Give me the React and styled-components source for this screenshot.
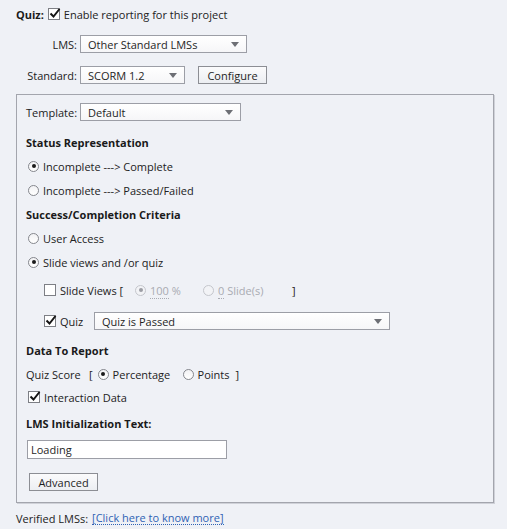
import React from 'react';
import styled, { createGlobalStyle } from 'styled-components';

const GlobalStyle = createGlobalStyle`
  html, body {
    margin: 0;
    padding: 0;
    background: #eff1f6;
  }
  body {
    font-family: "Open Sans", "Liberation Sans", Arial, sans-serif;
    font-size: 11px;
    color: #1f1f1f;
  }
`;

const Page = styled.div`
  width: 507px;
  height: 529px;
  box-sizing: border-box;
  padding: 6px 0 0 16px;
  display: flex;
  flex-direction: column;
`;

const Row = styled.div`
  display: flex;
  align-items: center;
  height: ${p => p.h || 24}px;
  margin-top: ${p => p.mt || 0}px;
  padding-left: ${p => p.indent || 0}px;
  flex-shrink: 0;
`;

const Bold = styled.span`
  font-weight: bold;
  color: #1a1a1a;
`;

const Label = styled.span`
  width: ${p => (p.w ? `${p.w}px` : 'auto')};
  text-align: ${p => (p.right ? 'right' : 'left')};
  padding-right: ${p => p.pr || 0}px;
  color: ${p => (p.disabled ? '#a9abb2' : '#222222')};
  white-space: nowrap;
  box-sizing: border-box;
`;

const Dotted = styled.span`
  border-bottom: 1px dotted #a9abb2;
`;

const SelectBox = styled.div`
  position: relative;
  width: ${p => p.w}px;
  height: 18px;
  box-sizing: border-box;
  border: 1px solid #9c9ea6;
  background: linear-gradient(#ffffff, #f6f6f8);
  display: flex;
  align-items: center;
  padding-left: 7px;
  color: #1f1f1f;
  margin-left: ${p => p.ml || 0}px;
`;

const Arrow = styled.span`
  position: absolute;
  right: 7px;
  top: 6px;
  width: 0;
  height: 0;
  border-left: 4px solid transparent;
  border-right: 4px solid transparent;
  border-top: 5px solid #6d6f75;
`;

const Button = styled.div`
  width: ${p => p.w}px;
  height: 18px;
  box-sizing: border-box;
  border: 1px solid #8c8e94;
  background: linear-gradient(#fbfbfc, #eceef2);
  display: flex;
  align-items: center;
  justify-content: center;
  color: #1f1f1f;
  margin-left: ${p => p.ml || 0}px;
`;

const Panel = styled.div`
  width: 478px;
  height: 409px;
  box-sizing: border-box;
  margin-top: 10px;
  border: 1px solid #a3a5ad;
  box-shadow: 1px 1px 0 #cfd1d8;
  padding: 8px 0 0 9px;
  display: flex;
  flex-direction: column;
`;

const RadioCircle = styled.span`
  width: 11px;
  height: 11px;
  box-sizing: border-box;
  border-radius: 50%;
  border: 1px solid ${p => (p.disabled ? '#c4c6cc' : '#85878d')};
  background: ${p => (p.disabled ? '#f2f3f6' : 'linear-gradient(#f2f2f4, #ffffff)')};
  display: inline-flex;
  align-items: center;
  justify-content: center;
  margin: 0 4px 0 ${p => p.ml || 2}px;
  flex-shrink: 0;

  &::after {
    content: '';
    display: ${p => (p.checked ? 'block' : 'none')};
    width: 4px;
    height: 4px;
    border-radius: 50%;
    background: ${p => (p.disabled ? '#9c9ea4' : '#1b1b1b')};
  }
`;

const CheckSquare = styled.span`
  width: 12px;
  height: 12px;
  box-sizing: border-box;
  border: 1px solid #7d7f85;
  background: #ffffff;
  display: inline-flex;
  margin: 0 4px 0 ${p => p.ml || 2}px;
  flex-shrink: 0;
  position: relative;

  svg {
    position: absolute;
    left: 0px;
    top: -2px;
  }
`;

const Radio = ({ checked, disabled, ml, children }) => (
  <>
    <RadioCircle checked={checked} disabled={disabled} ml={ml} />
    {children}
  </>
);

const Check = ({ checked, ml }) => (
  <CheckSquare ml={ml}>
    {checked && (
      <svg width="12" height="12" viewBox="0 0 12 12">
        <path d="M1.5 6.5 L4.5 9.5 L10.5 2" fill="none" stroke="#151515" strokeWidth="2" />
      </svg>
    )}
  </CheckSquare>
);

const TextInput = styled.div`
  width: 200px;
  height: 19px;
  box-sizing: border-box;
  border: 1px solid #9c9ea6;
  background: #ffffff;
  display: flex;
  align-items: center;
  padding-left: 3px;
  margin: 4px 0 0 1px;
  flex-shrink: 0;
`;

const Link = styled.span`
  color: #2f62b4;
  border-bottom: 1px dotted #2f62b4;
  line-height: 13px;
  margin-left: 4px;
`;

export default function App() {
  return (
    <>
      <GlobalStyle />
      <Page>
        <Row h={16}>
          <Bold>Quiz:</Bold>
          <Check checked ml={4} />
          <Label>Enable reporting for this project</Label>
        </Row>

        <Row h={18} mt={13}>
          <Label w={64} right pr={3}>LMS:</Label>
          <SelectBox w={167}>
            Other Standard LMSs
            <Arrow />
          </SelectBox>
        </Row>

        <Row h={18} mt={13}>
          <Label w={64} right pr={3}>Standard:</Label>
          <SelectBox w={105}>
            SCORM 1.2
            <Arrow />
          </SelectBox>
          <Button w={69} ml={13}>Configure</Button>
        </Row>

        <Panel>
          <Row h={18}>
            <Label w={54} pr={3}>Template:</Label>
            <SelectBox w={161}>
              Default
              <Arrow />
            </SelectBox>
          </Row>

          <Row mt={9}>
            <Bold>Status Representation</Bold>
          </Row>
          <Row>
            <Radio checked><Label>Incomplete ---&gt; Complete</Label></Radio>
          </Row>
          <Row>
            <Radio><Label>Incomplete ---&gt; Passed/Failed</Label></Radio>
          </Row>
          <Row>
            <Bold>Success/Completion Criteria</Bold>
          </Row>
          <Row>
            <Radio><Label>User Access</Label></Radio>
          </Row>
          <Row>
            <Radio checked><Label>Slide views and /or quiz</Label></Radio>
          </Row>

          <Row h={32}>
            <Check ml={18} />
            <Label w={73}>Slide Views [</Label>
            <Radio checked disabled>
              <Label w={51} disabled><Dotted>100</Dotted> %</Label>
            </Radio>
            <Radio disabled>
              <Label w={74} disabled><Dotted>0</Dotted> Slide(s)</Label>
            </Radio>
            <Label>]</Label>
          </Row>

          <Row h={30}>
            <Check checked ml={18} />
            <Label w={34}>Quiz</Label>
            <SelectBox w={296}>
              Quiz is Passed
              <Arrow />
            </SelectBox>
          </Row>

          <Row mt={2}>
            <Bold>Data To Report</Bold>
          </Row>
          <Row>
            <Label w={63}>Quiz Score</Label>
            <Label pr={3}>[</Label>
            <Radio checked><Label w={68}>Percentage</Label></Radio>
            <Radio><Label w={38}>Points</Label></Radio>
            <Label>]</Label>
          </Row>
          <Row h={22}>
            <Check checked />
            <Label>Interaction Data</Label>
          </Row>
          <Row h={26} mt={2}>
            <Bold>LMS Initialization Text:</Bold>
          </Row>
          <TextInput>Loading</TextInput>
          <Row h={18} mt={14} indent={3}>
            <Button w={69}>Advanced</Button>
          </Row>
        </Panel>

        <Row h={16} mt={7}>
          <Label>Verified LMSs:</Label>
          <Link>[Click here to know more]</Link>
        </Row>
      </Page>
    </>
  );
}
